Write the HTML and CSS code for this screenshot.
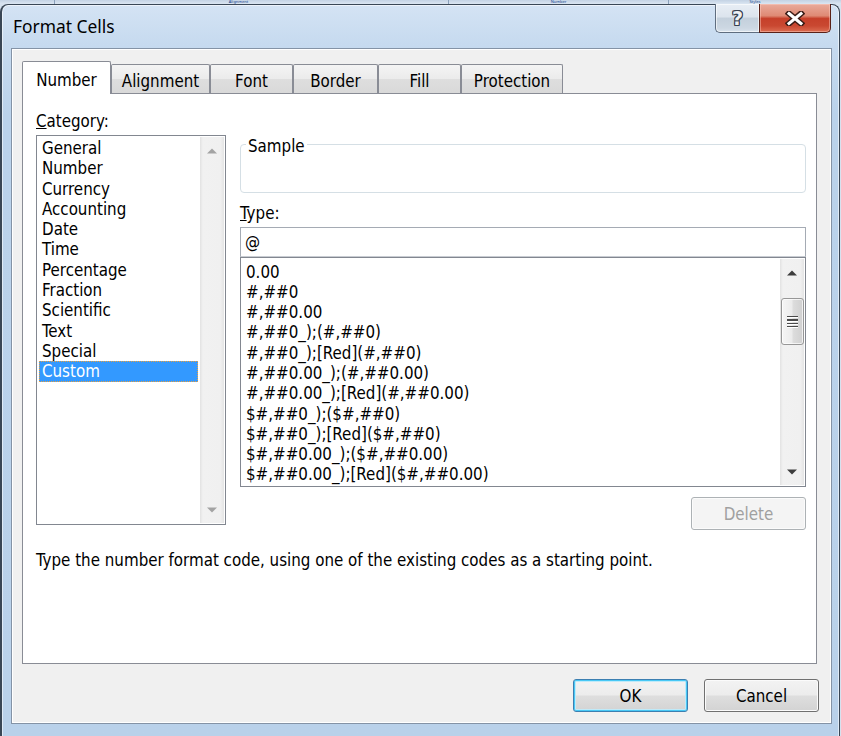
FILE: index.html
```html
<!DOCTYPE html>
<html>
<head>
<meta charset="utf-8">
<title>Format Cells</title>
<link rel="stylesheet" href="styles.css">
</head>
<body>
<div class="ribbon">
  <div class="rgroup g1"></div>
  <div class="rgroup g2"><span>Alignment</span></div>
  <div class="rgroup g3"><span>Number</span></div>
  <div class="rgroup g4"><span>Styles</span></div>
</div>
<div class="window">
  <div class="titlebar">
    <div class="title">Format Cells</div>
    <div class="caption">
      <div class="cbtn help"><span class="qmark">?</span></div>
      <div class="cbtn close">
        <svg width="20" height="15" viewBox="0 0 20 15"><path d="M4 2.5 L16 12.5 M16 2.5 L4 12.5" stroke="#3a1c16" stroke-width="6" stroke-linecap="square" fill="none"/><path d="M4 2.5 L16 12.5 M16 2.5 L4 12.5" stroke="#ffffff" stroke-width="3" stroke-linecap="square" fill="none"/></svg>
      </div>
    </div>
  </div>
  <div class="client">
    <div class="tabs">
      <div class="tab active w-number">Number</div>
      <div class="tab w-align">Alignment</div>
      <div class="tab w-font">Font</div>
      <div class="tab w-border">Border</div>
      <div class="tab w-fill">Fill</div>
      <div class="tab w-prot">Protection</div>
    </div>
    <div class="panel">
      <div class="cols">
        <div class="leftcol">
          <div class="label cat-label"><u>C</u>ategory:</div>
          <div class="listbox catlist">
            <ul class="items cat-items">
              <li>General</li>
              <li>Number</li>
              <li>Currency</li>
              <li>Accounting</li>
              <li>Date</li>
              <li>Time</li>
              <li>Percentage</li>
              <li>Fraction</li>
              <li>Scientific</li>
              <li>Text</li>
              <li>Special</li>
              <li class="selected">Custom</li>
            </ul>
            <div class="vscroll">
              <div class="sbtn"><svg width="10" height="6" viewBox="0 0 10 6"><polygon points="0,5.5 5,0.5 10,5.5" fill="#a3a3a3"/></svg></div>
              <div class="strack"></div>
              <div class="sbtn"><svg width="10" height="6" viewBox="0 0 10 6"><polygon points="0,0.5 5,5.5 10,0.5" fill="#a3a3a3"/></svg></div>
            </div>
          </div>
        </div>
        <div class="rightcol">
          <div class="sample"><span class="sample-label">Sample</span></div>
          <div class="label type-label"><u>T</u>ype:</div>
          <div class="textbox">@</div>
          <div class="listbox typelist">
            <ul class="items type-items">
              <li>0.00</li>
              <li>#,##0</li>
              <li>#,##0.00</li>
              <li>#,##0_);(#,##0)</li>
              <li>#,##0_);[Red](#,##0)</li>
              <li>#,##0.00_);(#,##0.00)</li>
              <li>#,##0.00_);[Red](#,##0.00)</li>
              <li>$#,##0_);($#,##0)</li>
              <li>$#,##0_);[Red]($#,##0)</li>
              <li>$#,##0.00_);($#,##0.00)</li>
              <li>$#,##0.00_);[Red]($#,##0.00)</li>
            </ul>
            <div class="vscroll">
              <div class="sbtn"><svg width="10" height="6" viewBox="0 0 10 6"><polygon points="0,5.5 5,0.5 10,5.5" fill="#3d3d3d"/></svg></div>
              <div class="strack">
                <div class="thumb">
                  <div class="grip"><i></i><i></i><i></i><i></i></div>
                </div>
              </div>
              <div class="sbtn"><svg width="10" height="6" viewBox="0 0 10 6"><polygon points="0,0.5 5,5.5 10,0.5" fill="#3d3d3d"/></svg></div>
            </div>
          </div>
          <div class="delete-row"><div class="btn disabled">Delete</div></div>
        </div>
      </div>
      <p class="desc">Type the number format code, using one of the existing codes as a starting point.</p>
    </div>
    <div class="footer">
      <div class="btn default">OK</div>
      <div class="btn">Cancel</div>
    </div>
  </div>
</div>
</body>
</html>
```
FILE: styles.css
```css
* { box-sizing: border-box; }
html, body { margin: 0; padding: 0; }
body {
  width: 841px;
  height: 736px;
  overflow: hidden;
  background: #d6e2ef;
  font-family: "DejaVu Sans Condensed", "DejaVu Sans", sans-serif;
  font-size: 16.8px;
  color: #000;
}

/* strip of the spreadsheet behind the dialog */
.ribbon {
  height: 4px;
  overflow: hidden;
  display: flex;
  background: linear-gradient(#c3d2e4, #dbe6f2);
}
.rgroup {
  height: 4px;
  display: flex;
  justify-content: center;
  align-items: flex-start;
  border-right: 1px solid #8aa0bb;
}
.rgroup span {
  font-family: "Noto Sans", sans-serif;
  font-size: 4px;
  line-height: 4px;
  color: #15428b;
}
.g1 { width: 55px; }
.g2 { width: 394px; padding-right: 26px; }
.g3 { width: 220px; }
.g4 { flex: 1; border-right: 0; }

/* window frame */
.window {
  width: 840px;
  height: 740px;
  border: 1px solid #394655;
  border-left-width: 2px;
  border-bottom: 0;
  border-radius: 8px 8px 0 0;
  background: linear-gradient(180deg, #d4e3f4 0px, #c6daef 40px, #bad2eb 110px, #b9d1ea 100%);
  box-shadow: inset 0 0 0 1px rgba(255, 255, 255, 0.55);
  padding: 0 7px 0 9px;
}
.titlebar {
  height: 43px;
  display: flex;
  align-items: flex-start;
}
.title {
  font-family: "Noto Sans", "Open Sans", sans-serif;
  font-size: 17.4px;
  line-height: 43px;
  padding-left: 2px;
  color: #000;
}
.caption {
  margin-left: auto;
  margin-right: 1px;
  margin-top: -1px;
  display: flex;
  height: 29px;
}
.cbtn {
  height: 29px;
  display: flex;
  align-items: center;
  justify-content: center;
}
.help {
  width: 44px;
  border: 1px solid #5f6d7f;
  border-top: 0;
  border-right: 0;
  border-radius: 0 0 0 5px;
  background: linear-gradient(#e8eef5 0%, #dce4ed 45%, #c4d0dc 52%, #ccd7e2 85%, #d8e2ec 100%);
  box-shadow: inset 0 0 0 1px rgba(255, 255, 255, 0.6);
}
.qmark {
  font-family: "DejaVu Sans", sans-serif;
  font-weight: bold;
  font-size: 19px;
  line-height: 20px;
  color: #eef1f4;
  text-shadow: 1px 0 0 #37424f, -1px 0 0 #37424f, 0 1px 0 #37424f, 0 -1px 0 #37424f,
               1px 1px 0 #37424f, -1px -1px 0 #37424f, 1px -1px 0 #37424f, -1px 1px 0 #37424f;
}
.close {
  width: 72px;
  border: 1px solid #5a2118;
  border-top: 0;
  border-radius: 0 0 5px 0;
  background: linear-gradient(#e9ab9c 0%, #df8a74 42%, #c6402a 52%, #c94831 78%, #dc6d52 100%);
  box-shadow: inset 0 0 0 1px rgba(255, 210, 200, 0.45);
}

/* client area */
.client {
  height: 676px;
  border: 1px solid #8493a6;
  background: #f0f0f0;
  box-shadow: inset 0 0 0 1px #ffffff;
  padding: 12px 12px 0 10px;
}
.tabs {
  height: 33px;
  margin-bottom: -1px;
  display: flex;
  align-items: flex-end;
}
.tab {
  height: 29px;
  margin-bottom: 1px;
  border: 1px solid #898c95;
  border-bottom: 0;
  border-radius: 2px 2px 0 0;
  background: linear-gradient(#f4f4f4 0%, #ebebeb 50%, #dedede 51%, #d9d9d9 100%);
  text-align: center;
  line-height: 20px;
  padding-top: 6px;
  white-space: nowrap;
}
.tab.active {
  position: relative;
  z-index: 1;
  height: 33px;
  margin-bottom: 0;
  background: #ffffff;
  padding-top: 8px;
}
.w-number { width: 89px; }
.w-align { width: 99px; }
.w-font { width: 83px; }
.w-border { width: 85px; }
.w-fill { width: 83px; }
.w-prot { width: 102px; }

.panel {
  height: 571px;
  margin-right: 2px;
  border: 1px solid #898c95;
  background: #ffffff;
  padding: 0 10px 0 13px;
}
.cols {
  display: flex;
  gap: 14px;
  align-items: flex-start;
}
.leftcol { width: 190px; }
.rightcol { width: 566px; }

.label { line-height: 20px; }
.cat-label { margin-top: 17px; margin-bottom: 4px; }

.listbox {
  border: 1px solid #828790;
  background: #fff;
  display: flex;
}
.catlist { height: 390px; }
.typelist { height: 230px; }

.items {
  list-style: none;
  margin: 0;
  flex: 1;
  min-width: 0;
}
.items li {
  height: 20.3px;
  line-height: 18.3px;
  border: 1px dotted transparent;
  white-space: nowrap;
}
.cat-items { padding: 2px 2px 0 2px; }
.cat-items li { padding-left: 2px; }
.cat-items li.selected {
  background: #3399ff;
  color: #ffffff;
  border-color: #e8a040;
}
.type-items { padding: 3.5px 2px 0 3px; }
.type-items li { padding-left: 1px; }

.vscroll {
  width: 24px;
  margin: 1px 1px 1px 0;
  display: flex;
  flex-direction: column;
  background: linear-gradient(to right, #e2e2e2 0%, #f1f1f1 12%, #f0f0f0 85%, #e4e4e4 100%);
}
.sbtn {
  height: 27px;
  display: flex;
  align-items: center;
  justify-content: center;
}
.sbtn svg { display: block; }
.strack { flex: 1; }
.thumb {
  margin: 12px 0 0 1px;
  width: 23px;
  height: 47px;
  border: 1px solid #979797;
  border-radius: 3px;
  background: linear-gradient(to right, #f5f5f5 0%, #ececec 45%, #dcdcdc 55%, #d0d0d0 100%);
  box-shadow: inset 0 0 0 1px rgba(255, 255, 255, 0.7);
  display: flex;
  align-items: center;
  justify-content: center;
}
.grip {
  width: 11px;
  display: flex;
  flex-direction: column;
  gap: 2px;
}
.grip i {
  display: block;
  height: 1.4px;
  background: #4a4a4a;
  box-shadow: 0 1px 0 #ffffff;
}

/* right column */
.sample {
  margin-top: 50px;
  height: 49px;
  border: 1px solid #d5dfe5;
  border-radius: 4px;
}
.sample-label {
  display: block;
  width: max-content;
  margin: -9px 0 0 5px;
  padding: 0 2px;
  background: #fff;
  line-height: 20px;
}
.type-label { margin-top: 10px; }
.textbox {
  margin-top: 4px;
  height: 30px;
  border: 1px solid #a5abb4;
  border-bottom-color: #c8ccd2;
  line-height: 28px;
  padding-left: 4px;
}
.delete-row {
  margin-top: 10px;
  display: flex;
  justify-content: flex-end;
}

.btn {
  width: 115px;
  height: 33px;
  border: 1px solid #707070;
  border-radius: 3px;
  background: linear-gradient(#f3f3f3 0%, #ececec 48%, #dedede 52%, #d3d3d3 100%);
  box-shadow: inset 0 0 0 1px #fbfbfb;
  display: flex;
  align-items: center;
  justify-content: center;
  line-height: 20px;
}
.btn.disabled {
  border-color: #adb2b5;
  background: #f4f4f4;
  color: #a0a0a0;
}
.btn.default {
  border-color: #3c7fb1;
  box-shadow: inset 0 0 0 1px #48c8f5, inset 0 0 0 2px #bfeaf9;
}

.desc {
  margin: 20px 0 0 0;
  line-height: 20px;
}

.footer {
  margin-top: 15px;
  display: flex;
  justify-content: flex-end;
  gap: 16px;
}
```
